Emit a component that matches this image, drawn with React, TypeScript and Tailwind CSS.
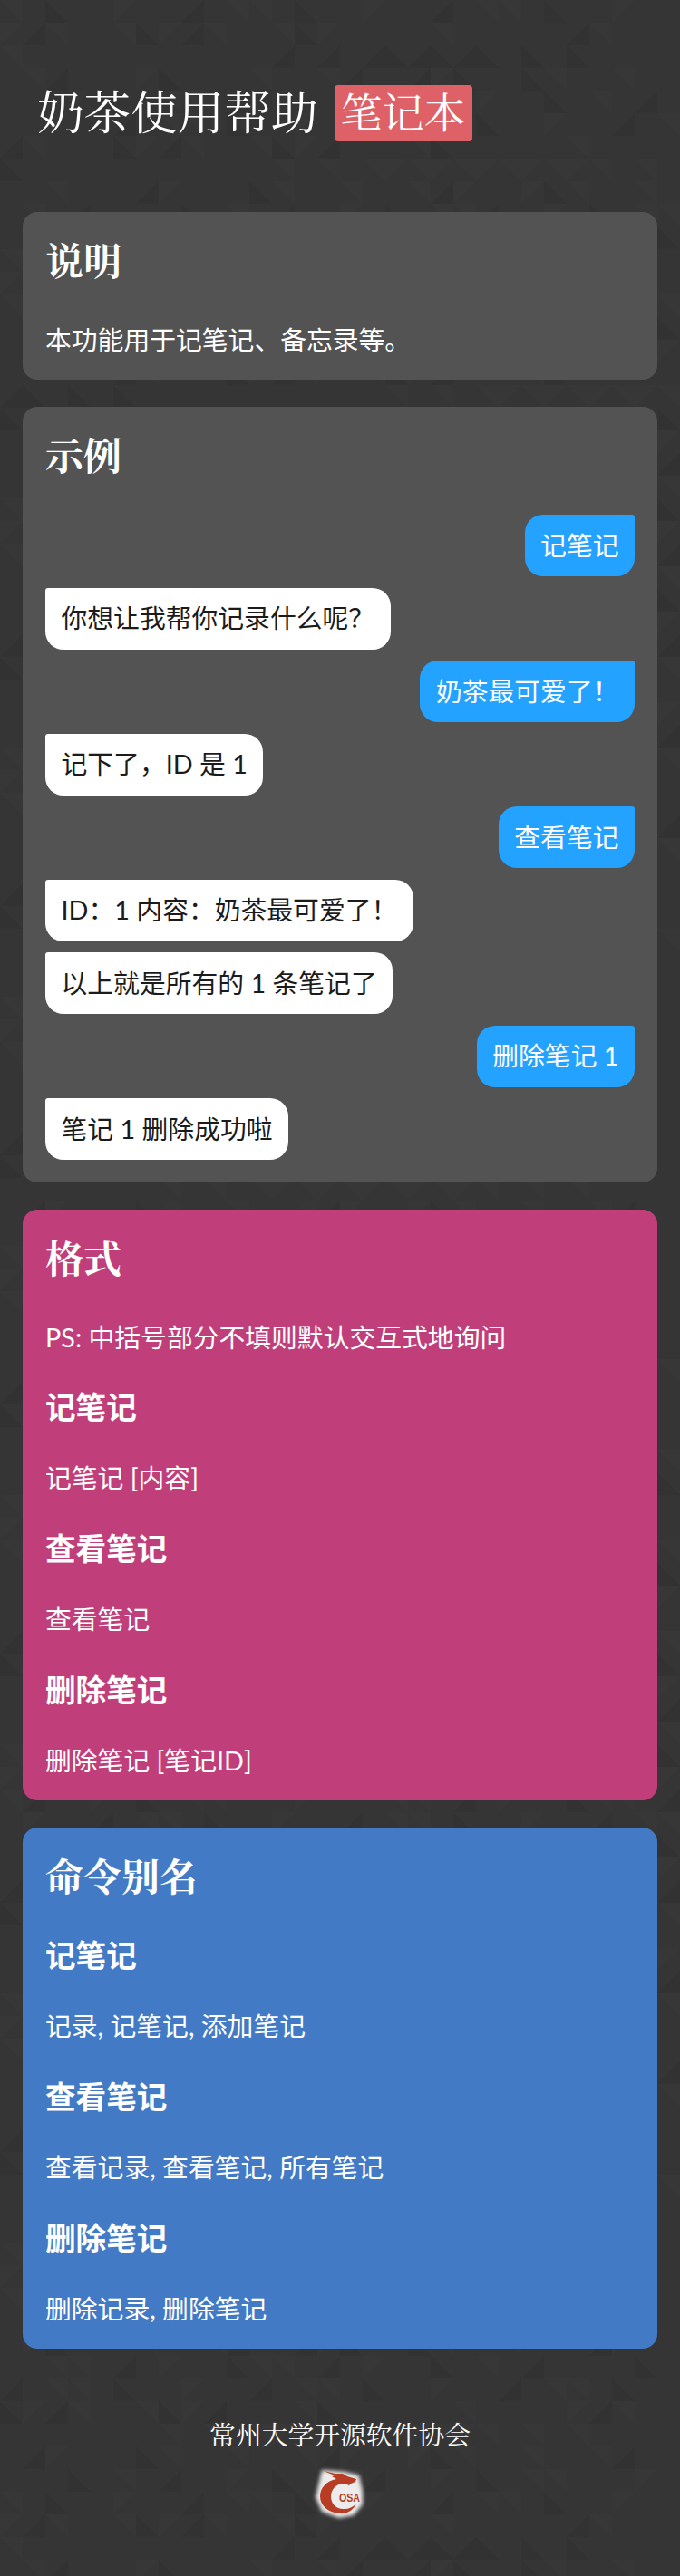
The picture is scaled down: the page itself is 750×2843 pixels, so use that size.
const bodyFont = "font-['Lato','Noto_Sans_CJK_SC',sans-serif]";
const headFont = "font-['Liberation_Serif','Noto_Serif_CJK_SC','Noto_Sans_CJK_SC',serif]";

type Msg = { text: string; self?: boolean };

// full-width punctuation, as in the chat transcript
const QUESTION = '\uFF1F';
const COMMA = '\uFF0C';
const COLON = '\uFF1A';
const BANG = '\uFF01';

const messages: Msg[] = [
  { text: '记笔记', self: true },
  { text: `你想让我帮你记录什么呢${QUESTION}` },
  { text: `奶茶最可爱了${BANG}`, self: true },
  { text: `记下了${COMMA}ID 是 1` },
  { text: '查看笔记', self: true },
  { text: `ID${COLON}1 内容${COLON}奶茶最可爱了${BANG}` },
  { text: '以上就是所有的 1 条笔记了' },
  { text: '删除笔记 1', self: true },
  { text: '笔记 1 删除成功啦' },
];

const formats = [
  { title: '记笔记', body: '记笔记 [内容]' },
  { title: '查看笔记', body: '查看笔记' },
  { title: '删除笔记', body: '删除笔记 [笔记ID]' },
];

const aliases = [
  { title: '记笔记', body: '记录, 记笔记, 添加笔记' },
  { title: '查看笔记', body: '查看记录, 查看笔记, 所有笔记' },
  { title: '删除笔记', body: '删除记录, 删除笔记' },
];

// faint triangles of the page's background texture, 25px cells
function Backdrop() {
  const cell = 25;
  const shapes = [];
  for (let row = 0; row < 114; row++) {
    for (let col = 0; col < 30; col++) {
      const n = (col * 7 + row * 13 + ((col * row) % 5) * 3) % 11;
      if (n > 4) continue;
      const x = col * cell;
      const y = row * cell;
      const points = [
        `${x},${y} ${x + cell},${y} ${x + cell},${y + cell}`,
        `${x},${y + cell} ${x + cell},${y} ${x + cell},${y + cell}`,
        `${x},${y} ${x + cell},${y} ${x},${y + cell}`,
        `${x},${y} ${x},${y + cell} ${x + cell},${y + cell}`,
      ][n % 4];
      shapes.push(
        <polygon key={`${row}-${col}`} points={points} fill={n % 2 ? '#2f2f2f' : '#3a3a3a'} opacity={0.45} />
      );
    }
  }
  return (
    <svg className="absolute inset-0 w-full h-full" viewBox="0 0 750 2843" aria-hidden="true">
      {shapes}
    </svg>
  );
}

function Logo() {
  return (
    <svg width="70" height="80" viewBox="0 0 70 80" className="mx-auto block">
      <defs>
        <filter id="glow" x="-30%" y="-30%" width="160%" height="160%">
          <feGaussianBlur stdDeviation="2" />
        </filter>
      </defs>
      <path
        d="M15 12 L40 14 L56 18 L60 36 L60 50 L50 62 L34 65 L15 58 L8 42 L12 25 Z"
        fill="#ececec"
        filter="url(#glow)"
      />
      <path
        d="M17 13 L30 16 L38 16 L43 19 L53 22 L52 25 L47 27 L45 29 L40 27 C32 26 25 33 25 41 C25 50 32 56 40 55 C45 55 49 53 53 49 C50 56 43 61 34 60 C22 59 13 51 13 41 C13 32 20 24 31 22 L26 19 L29 18 Z"
        fill="#b93d25"
      />
      <text x="34" y="47" textLength="23" lengthAdjust="spacingAndGlyphs" fontSize="13" fontWeight="700" fontFamily="Liberation Sans, sans-serif" fill="#b93d25">
        OSA
      </text>
    </svg>
  );
}

function Card({ title, color, children }: { title: string; color: string; children: React.ReactNode }) {
  return (
    <section className={`rounded-[16px] px-[25px] pt-[29px] pb-[21px] text-white ${color}`}>
      <h2 className={`text-[42px] leading-[54px] font-bold mb-[35px] ${headFont}`}>{title}</h2>
      {children}
    </section>
  );
}

function CommandList({ items }: { items: { title: string; body: string }[] }) {
  return (
    <div className="flex flex-col gap-[32px]">
      {items.map((item) => (
        <div key={item.title} className="flex flex-col gap-[32px]">
          <h3 className="text-[33.6px] leading-[46px] font-bold">{item.title}</h3>
          <p className="text-[28.8px] leading-[46px]">{item.body}</p>
        </div>
      ))}
    </div>
  );
}

export default function App() {
  return (
    <div className={`relative w-[750px] h-[2843px] overflow-hidden bg-[#353535] ${bodyFont}`}>
      <Backdrop />
      <div className="relative px-[25px]">
        {/* Header */}
        <header className="flex items-center h-[234px] pl-[16px] pt-[16px] text-white">
          <h1 className={`text-[51.6px] leading-none pt-[2px] ${headFont}`}>奶茶使用帮助</h1>
          <span className={`ml-[18px] rounded-[4px] bg-[#dd6166] px-[7px] h-[62px] flex items-center text-[46px] ${headFont}`}>
            笔记本
          </span>
        </header>

        <div className="flex flex-col gap-[30px]">
          <Card title="说明" color="bg-[#535353]">
            <p className="text-[28.8px] leading-[46px]">本功能用于记笔记、备忘录等。</p>
          </Card>

          {/* Chat example */}
          <section className="rounded-[16px] bg-[#535353] px-[25px] pt-[29px] pb-[25px] text-white">
            <h2 className={`text-[42px] leading-[54px] font-bold mb-[36px] ${headFont}`}>示例</h2>
            <div className="flex flex-col gap-[12.5px]">
              {messages.map((msg) => (
                <div key={msg.text} className={msg.self ? 'flex justify-end' : 'flex justify-start'}>
                  <div
                    className={`h-[68px] flex items-center px-[17.5px] text-[28.8px] leading-none ${
                      msg.self
                        ? 'bg-[#23a2ff] text-white rounded-[20px] rounded-tr-[3px]'
                        : 'bg-white text-[#1b1b1b] rounded-[20px] rounded-tl-[3px]'
                    }`}
                  >
                    {msg.text}
                  </div>
                </div>
              ))}
            </div>
          </section>

          <Card title="格式" color="bg-[#c03f7a]">
            <p className="text-[28.8px] leading-[46px] mb-[31px]">PS: 中括号部分不填则默认交互式地询问</p>
            <CommandList items={formats} />
          </Card>

          <Card title="命令别名" color="bg-[#437ac5]">
            <CommandList items={aliases} />
          </Card>
        </div>

        {/* Footer */}
        <footer className="mt-[76px] text-center text-white">
          <p className={`text-[28.8px] leading-[40px] ${headFont}`}>常州大学开源软件协会</p>
          <div className="mt-[6px]">
            <Logo />
          </div>
        </footer>
      </div>
    </div>
  );
}
